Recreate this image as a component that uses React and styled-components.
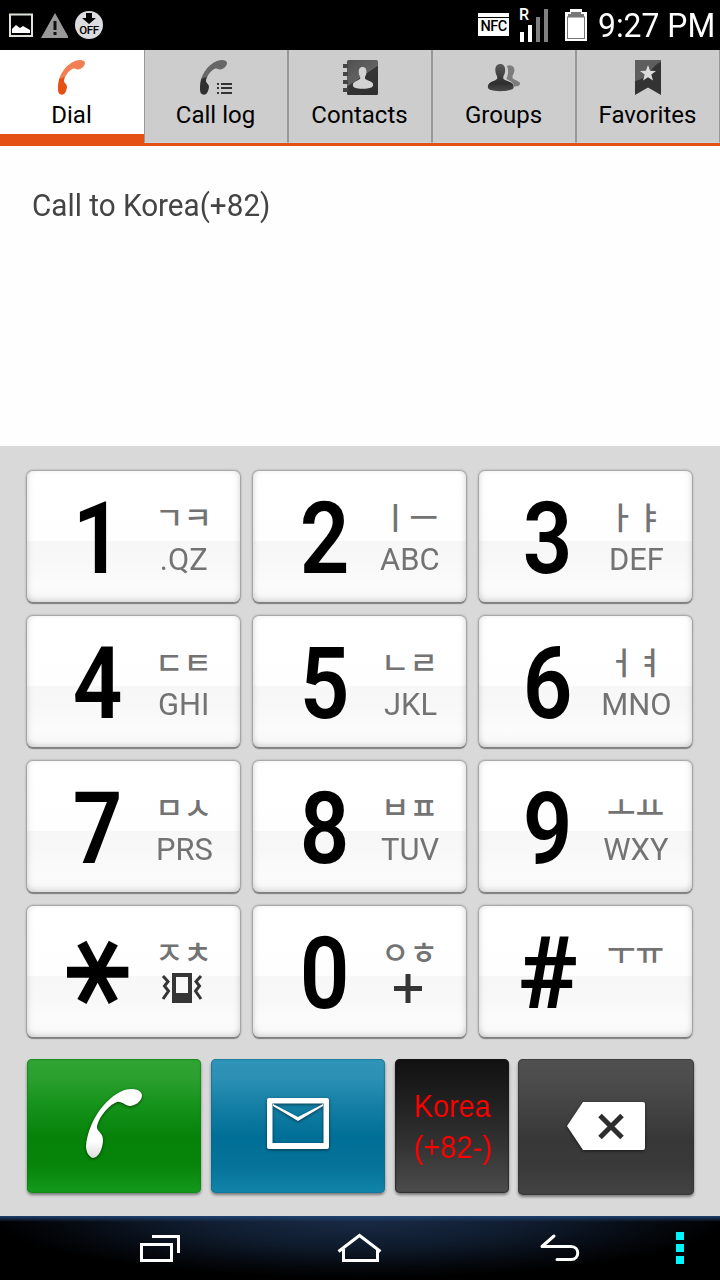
import React from "react";
import styled, { createGlobalStyle } from "styled-components";

const Global = createGlobalStyle`
  * { box-sizing: border-box; }
  body { margin: 0; background: #fff; font-family: Roboto, "Noto Sans CJK KR", sans-serif; }
`;

const Screen = styled.div`
  width: 720px;
  height: 1280px;
  display: flex;
  flex-direction: column;
  overflow: hidden;
  background: #fff;
`;

const Label = styled.span`
  display: block;
  white-space: nowrap;
  line-height: 1;
  font-size: ${(p) => p.$size}px;
  font-weight: ${(p) => p.$weight || 400};
  color: ${(p) => p.$color || "#000"};
  transform: scaleX(${(p) => p.$sx || 1});
  transform-origin: ${(p) => p.$origin || "center"};
`;

/* ---------- status bar ---------- */
const StatusBar = styled.header`
  height: 50px;
  background: #000;
  display: flex;
  align-items: center;
  justify-content: space-between;
  padding: 0 5px 0 8px;
`;
const StatusGroup = styled.div`
  display: flex;
  align-items: center;
  height: 50px;
`;
const DownloadOff = styled.div`
  width: 28px;
  height: 28px;
  margin-left: 7px;
  border-radius: 50%;
  background: #dcdce0;
  display: flex;
  flex-direction: column;
  align-items: center;
  padding-top: 2px;
  font-size: 11.5px;
  font-weight: 500;
  line-height: 12px;
  letter-spacing: -0.3px;
  color: #000;
`;
const Nfc = styled.div`
  width: 31px;
  height: 23px;
  margin-top: -1px;
  background: #fff;
  padding-top: 4px;
  color: #000;
`;
const NfcText = styled.div`
  border-top: 1.5px solid #000;
  font-size: 14.5px;
  font-weight: 500;
  line-height: 18px;
  text-align: center;
  letter-spacing: -0.5px;
`;
const Signal = styled.div`
  width: 28px;
  height: 35px;
  margin: -2px 0 0 11px;
  display: flex;
  align-items: flex-end;
  gap: 4px;
  position: relative;
`;
const Roaming = styled.span`
  position: absolute;
  left: -1px;
  top: 0;
  font-size: 16px;
  line-height: 15px;
  font-weight: 500;
  color: #fff;
`;
const Bar = styled.i`
  width: 4px;
  height: ${(p) => p.$h}px;
  background: ${(p) => (p.$on ? "#fff" : "#808080")};
`;
const Battery = styled.svg`
  display: block;
  margin-left: 16px;
`;
const Clock = styled.div`
  width: 117px;
  margin-left: 10px;
`;

/* ---------- tabs ---------- */
const Tabs = styled.nav`
  display: flex;
  height: 96px;
  border-bottom: 3px solid #e55014;
`;
const Tab = styled.div`
  width: 144px;
  height: ${(p) => (p.$active ? 96 : 93)}px;
  background: ${(p) => (p.$active ? "#fff" : "#cdcdcd")};
  border-bottom: ${(p) => (p.$active ? "12px solid #e55014" : "1px solid #ccd6dc")};
  border-right: ${(p) => (p.$active ? "0" : "1px solid #999")};
  border-left: ${(p) => (p.$active ? "0" : "1px solid #999")};
  display: flex;
  flex-direction: column;
  align-items: center;
  padding: 9px 1px 0 0;
  flex: none;
`;
const TabIcon = styled.div`
  height: 38px;
  margin-bottom: 6px;
`;

/* ---------- number display ---------- */
const Display = styled.main`
  height: 300px;
  padding: 44px 0 0 32px;
  background: #fefefe;
`;

/* ---------- keypad ---------- */
const Pad = styled.section`
  height: 770px;
  background: #d9d9d9;
  padding: 25px 26px 0 27px;
`;
const Keys = styled.div`
  display: grid;
  grid-template-columns: repeat(3, 213px);
  gap: 14px 13px;
`;
const Key = styled.div`
  height: 131px;
  border-radius: 6px;
  background: linear-gradient(#fff 0, #fefefe 70px, #f7f7f7 70px, #f8f8f8 90px, #fbfbfb 115px, #f7f7f7 100%);
  box-shadow: inset 0 -4px 6px -2px rgba(0, 0, 0, 0.12), inset 4px 0 7px -4px rgba(0, 0, 0, 0.13),
    inset -4px 0 7px -4px rgba(0, 0, 0, 0.13), 0 1.5px 1px #808080, 0 0 2px 1px rgba(0, 0, 0, 0.3);
  display: grid;
  grid-template-columns: ${(p) => p.$split}px auto;
  justify-content: start;
`;
const Digit = styled.div`
  display: flex;
  justify-content: center;
  align-items: flex-start;
  padding-top: 18px;
  height: 131px;
`;
/* The glyph has a vertical arm; a quarter turn makes it horizontal. */
const Star = styled.span`
  display: block;
  width: 68px;
  height: 96px;
  padding-top: 16px;
  margin-right: 30px;
  font-family: "DejaVu Sans", sans-serif;
  font-size: 131px;
  font-weight: 700;
  line-height: 80px;
  transform: rotate(90deg);
`;
const Legend = styled.div`
  width: 90px;
  margin-left: ${(p) => p.$shift}px;
  display: flex;
  flex-direction: column;
  align-items: center;
  padding-top: 28px;
`;
const Jamo = styled.div`
  font-family: "Noto Sans CJK KR", sans-serif;
  font-size: 31px;
  font-weight: 500;
  line-height: 34px;
  height: 44px;
  margin-left: -1px;
  color: #737373;
  white-space: nowrap;
`;
const KeyArt = styled.div`
  margin: -6px 4px 0 0;
`;

/* ---------- action row ---------- */
const Actions = styled.div`
  display: flex;
  align-items: flex-start;
  padding-top: 22px;
`;
const skins = {
  green: ["linear-gradient(#2fa333, #2ba02f 14%, #15931a 34%, #068209 58%, #06850a 80%, #149a1c 100%)", "#0b7d10"],
  blue: ["linear-gradient(#3094b8, #2c90b5 14%, #157fa5 34%, #006f97 58%, #057399 80%, #1284aa 100%)", "#0a6a8c"],
  black: ["linear-gradient(#111, #1d1d1d 25%, #303030 60%, #4c4c4c 100%)", "#161616"],
  grey: ["linear-gradient(#505050, #4d4d4d 14%, #414141 40%, #373737 60%, #3a3a3a 80%, #434343 100%)", "#303030"],
};
const Action = styled.button`
  border: 0;
  padding: 0 0 ${(p) => p.$lift || 0}px ${(p) => p.$inset || 0}px;
  width: ${(p) => p.$w}px;
  height: ${(p) => p.$h || 134}px;
  margin-right: ${(p) => p.$gap || 0}px;
  border-radius: 5px;
  background: ${(p) => skins[p.$skin][0]};
  box-shadow: inset 0 0 1px 0.5px ${(p) => skins[p.$skin][1]}, 0 2px 3px rgba(0, 0, 0, 0.45);
  display: flex;
  flex-direction: column;
  align-items: center;
  justify-content: center;
  gap: 9px;
  flex: none;
`;
const IconShadow = styled.svg`
  display: block;
  overflow: visible;
  filter: drop-shadow(0 1px 1.5px rgba(0, 0, 0, 0.55));
`;

/* ---------- navigation bar ---------- */
const NavBar = styled.footer`
  height: 64px;
  background: linear-gradient(#1f4270 0, rgba(31, 66, 112, 0) 6px),
    radial-gradient(ellipse 370px 62px at 50% 0, #1a2c48 0, #101d30 45%, #04070c 85%, #000 100%);
  display: flex;
  align-items: flex-start;
  padding: 17px 0 0 139px;
`;
const NavIcon = styled.svg`
  display: block;
  flex: none;
  margin-right: ${(p) => p.$gap}px;
`;
const More = styled.div`
  display: grid;
  gap: 4px;
  margin-top: -1px;
`;
const Dot = styled.i`
  width: 8px;
  height: 8px;
  background: #00f6ff;
`;

const Handset = ({ hi, lo, id }) => (
  <>
    <defs>
      <linearGradient id={id} x1="0" y1="0" x2="0.25" y2="1">
        <stop offset="0" stopColor={hi} />
        <stop offset="0.5" stopColor={hi} />
        <stop offset="0.54" stopColor={lo} />
        <stop offset="1" stopColor={lo} />
      </linearGradient>
    </defs>
    <path
      fill={`url(#${id})`}
      d="M1 28C1 17 8 6 18 2C23 0 28 1 28 4C28 7 24 10.500 21 10.500C19.500 10.500 18.500 9 16.500 9.500C12 11 7 18 7 22C7 24 10 25 10 28C9.800 30 9 32.500 8 34C6.500 36.500 2.500 36 1.500 33.500C1 32 1 30 1 28Z"
    />
  </>
);

const PERSON =
  "M12 0C15.500 0 17 2.500 16.800 6C16.700 8.500 15.800 10 15 11.500V13.500C17 15.500 22.500 16 24.500 18.500C25.500 20.500 25.500 22.500 23 23.500C17 25.500 7 25.500 1.500 23.500C-.5 22.500-.5 20.500 .5 18.500C2.500 16 7 15.500 9 13.500V11.500C8.200 10 7.300 8.500 7.200 6C7 2.500 8.500 0 12 0Z";

const icons = {
  dial: (
    <svg width="30" height="38">
      <Handset id="hsOrange" hi="#f07f53" lo="#e55014" />
    </svg>
  ),
  log: (
    <svg width="34" height="38">
      <Handset id="hsDark" hi="#676767" lo="#303030" />
      <g stroke="#333" strokeWidth="2">
        <path d="M18 25H20M22 25H33M18 29H20M22 29H33M18 34H20M22 34H33" />
      </g>
    </svg>
  ),
  contacts: (
    <svg width="36" height="38">
      <defs>
        <linearGradient id="book" x1="0" y1="0" x2=".6" y2="1">
          <stop offset="0" stopColor="#505050" />
          <stop offset=".55" stopColor="#626262" />
          <stop offset=".57" stopColor="#353535" />
          <stop offset="1" stopColor="#303030" />
        </linearGradient>
      </defs>
      <rect x="5" y="1" width="31" height="35" rx="1.500" fill="url(#book)" />
      <path d="M1 7H6M1 15H6M1 23H6M1 31H6" stroke="#444" strokeWidth="4" />
      <path d={PERSON} fill="#d3d3d3" transform="translate(11 8) scale(.8 .87)" />
    </svg>
  ),
  groups: (
    <svg width="34" height="38">
      <defs>
        <linearGradient id="person" x1="0" y1="0" x2="0" y2="1">
          <stop offset="0" stopColor="#5a5a5a" />
          <stop offset=".7" stopColor="#2d2d2d" />
          <stop offset="1" stopColor="#4a4a4a" />
        </linearGradient>
      </defs>
      <path
        d="M20 7C22 5.500 26 6.500 27 9C28 12 27 14 25.500 17V19C27 21 32 22 33 24C33.500 27 30 27.500 27 27.500C27 24 23 22 19.500 20C21 16 22 12 20 7Z"
        fill="#7c7c7c"
      />
      <path d={PERSON} fill="url(#person)" transform="translate(1 5) scale(1.020 1.090)" />
    </svg>
  ),
  favorites: (
    <svg width="26" height="38">
      <path d="M0 1H26V36L13 28.500L0 36Z" fill="#333" />
      <path d="M0 1H26V3C18 5 13 20 0 22Z" fill="#5e5e5e" />
      <path
        d="M13 6L15.100 11.700L21 12L16.300 15.600L18 21.500L13 18.200L8 21.500L9.700 15.600L5 12L10.900 11.700Z"
        fill="#dcdcdc"
      />
    </svg>
  ),
};

const tabs = [
  ["dial", "Dial"],
  ["log", "Call log"],
  ["contacts", "Contacts"],
  ["groups", "Groups"],
  ["favorites", "Favorites"],
];

const Vibrate = () => (
  <svg width="42" height="32">
    <rect x="13" y="3" width="16" height="26" fill="none" stroke="#353535" strokeWidth="4" />
    <rect x="11" y="21" width="20" height="10" fill="#353535" />
    <path
      d="M2 4L7 9.500L3.500 14L7.500 19L2 27M40 4L35 9.500L38.500 14L34.500 19L40 27"
      fill="none"
      stroke="#353535"
      strokeWidth="3"
    />
  </svg>
);

const Plus = () => (
  <svg width="28" height="32">
    <path d="M14 2V31M0 16.500H28" stroke="#353535" strokeWidth="5" />
  </svg>
);

const keys = [
  { n: "1", jamo: "ㄱㅋ", text: ".QZ" },
  { n: "2", jamo: "ㅣㅡ", text: "ABC" },
  { n: "3", jamo: "ㅏㅑ", text: "DEF" },
  { n: "4", jamo: "ㄷㅌ", text: "GHI" },
  { n: "5", jamo: "ㄴㄹ", text: "JKL" },
  { n: "6", jamo: "ㅓㅕ", text: "MNO" },
  { n: "7", jamo: "ㅁㅅ", text: "PRS" },
  { n: "8", jamo: "ㅂㅍ", text: "TUV" },
  { n: "9", jamo: "ㅗㅛ", text: "WXY" },
  { n: "*", jamo: "ㅈㅊ", art: <Vibrate /> },
  { n: "0", jamo: "ㅇㅎ", art: <Plus /> },
  { n: "#", jamo: "ㅜㅠ" },
];
const splits = [142, 144, 138];

export default function App() {
  return (
    <Screen>
      <Global />
      <StatusBar>
        <StatusGroup>
          <svg width="60" height="30">
            <rect x="2" y="4.500" width="22" height="21.500" fill="#000" stroke="#dfe3dc" strokeWidth="2" />
            <path d="M4 23V19L8 15L12 18L15 16L22 20V23Z" fill="#fff" />
            <path d="M47 3L61 28H33Z" fill="#999" />
            <path d="M47 11V20M47 22V25" stroke="#111" strokeWidth="3" />
          </svg>
          <DownloadOff>
            <svg width="14" height="11">
              <path d="M4 0H10V5H14L7 11L0 5H4Z" />
            </svg>
            OFF
          </DownloadOff>
        </StatusGroup>
        <StatusGroup>
          <Nfc>
            <NfcText>NFC</NfcText>
          </Nfc>
          <Signal>
            <Roaming>R</Roaming>
            <Bar $h={10} $on />
            <Bar $h={17} $on />
            <Bar $h={25} />
            <Bar $h={33} />
          </Signal>
          <Battery width="24" height="34">
            <path d="M6 1H18V4H23V33H1V4H6Z" fill="#fff" />
            <path d="M7 4H17V6H20V9H4V6H7Z" fill="#777" />
            <rect x="3.500" y="9" width="17" height="21.500" fill="#fff" stroke="#777" />
          </Battery>
          <Clock>
            <Label $size={33} $color="#fff" $sx={0.965} $origin="left">
              9:27 PM
            </Label>
          </Clock>
        </StatusGroup>
      </StatusBar>
      <Tabs>
        {tabs.map(([icon, name], i) => (
          <Tab key={name} $active={i === 0}>
            <TabIcon>{icons[icon]}</TabIcon>
            <Label $size={24}>{name}</Label>
          </Tab>
        ))}
      </Tabs>
      <Display>
        <Label $size={31} $color="#444" $sx={0.957} $origin="left">
          Call to Korea(+82)
        </Label>
      </Display>
      <Pad>
        <Keys>
          {keys.map((k, i) => (
            <Key key={k.n} $split={splits[i % 3]}>
              <Digit>
                {k.n === "*" ? (
                  <Star>*</Star>
                ) : (
                  <Label $size={100} $weight={k.n === "#" ? 700 : 600} $sx={k.n === "#" ? 1 : 0.87}>
                    {k.n}
                  </Label>
                )}
              </Digit>
              <Legend $shift={112 - splits[i % 3]}>
                <Jamo>{k.jamo}</Jamo>
                {k.text && (
                  <Label $size={32} $color="#737373" $sx={0.965}>
                    {k.text}
                  </Label>
                )}
                {k.art && <KeyArt>{k.art}</KeyArt>}
              </Legend>
            </Key>
          ))}
        </Keys>
        <Actions>
          <Action $w={174} $gap={10} $lift={6} $skin="green">
            <IconShadow width="60" height="74">
              <defs>
                <linearGradient id="white" x1="0" y1="0" x2="0" y2="1">
                  <stop offset=".75" stopColor="#fff" />
                  <stop offset="1" stopColor="#ddd" />
                </linearGradient>
              </defs>
              <path
                fill="url(#white)"
                d="M9 72C5 71 2 66 2 60C4 39 17 16 36 6C44 1 57 2 58 9C58 16 50 20 46 20C41 20 38 15 33 16C24 19 13 34 13 42C14 46 19 47 19 54C19 63 14 72 9 72Z"
              />
            </IconShadow>
          </Action>
          <Action $w={174} $gap={10} $lift={6} $skin="blue">
            <IconShadow width="64" height="52">
              <path
                fillRule="evenodd"
                fill="#fff"
                d="M3 1H61Q63 1 63 3V50Q63 52 61 52H3Q1 52 1 50V3Q1 1 3 1ZM6.500 6.500V46H57.500V6.500Z"
              />
              <path d="M7 7L32 20L57 7V9L32 24L7 9Z" fill="#fff" />
            </IconShadow>
          </Action>
          <Action $w={114} $gap={9} $inset={2} $skin="black">
            <Label $size={32} $color="#f00" $sx={0.9}>
              Korea
            </Label>
            <Label $size={32} $color="#f00" $sx={0.91}>
              (+82-)
            </Label>
          </Action>
          <Action $w={176} $h={136} $lift={3} $skin="grey">
            <IconShadow width="78" height="48">
              <path d="M16 0H76Q78 0 78 2V46Q78 48 76 48H16L0 24Z" fill="#fff" />
              <path d="M33 13.500L55 35.500M55 13.500L33 35.500" stroke="#2e2e2e" strokeWidth="5" />
            </IconShadow>
          </Action>
        </Actions>
      </Pad>
      <NavBar>
        <NavIcon $gap={156} width="42" height="30" fill="none" stroke="#fff" strokeWidth="3">
          <path d="M2.500 11.500H32.500V27.500H2.500Z" />
          <path d="M13 3.500H39.500V20" />
        </NavIcon>
        <NavIcon $gap={156} width="46" height="30" fill="none" stroke="#fff" strokeWidth="3">
          <path d="M1.500 18.500L22.500 2.500L43.500 18.500M6.500 16V27.500H40.500V16" />
        </NavIcon>
        <NavIcon
          $gap={95}
          width="42"
          height="30"
          fill="none"
          stroke="#fff"
          strokeWidth="3"
          strokeLinecap="round"
          strokeLinejoin="round"
        >
          <path d="M15 3L3 13.500H32C41 13.500 41 26.500 32 26.500H18" />
        </NavIcon>
        <More>
          <Dot />
          <Dot />
          <Dot />
        </More>
      </NavBar>
    </Screen>
  );
}
